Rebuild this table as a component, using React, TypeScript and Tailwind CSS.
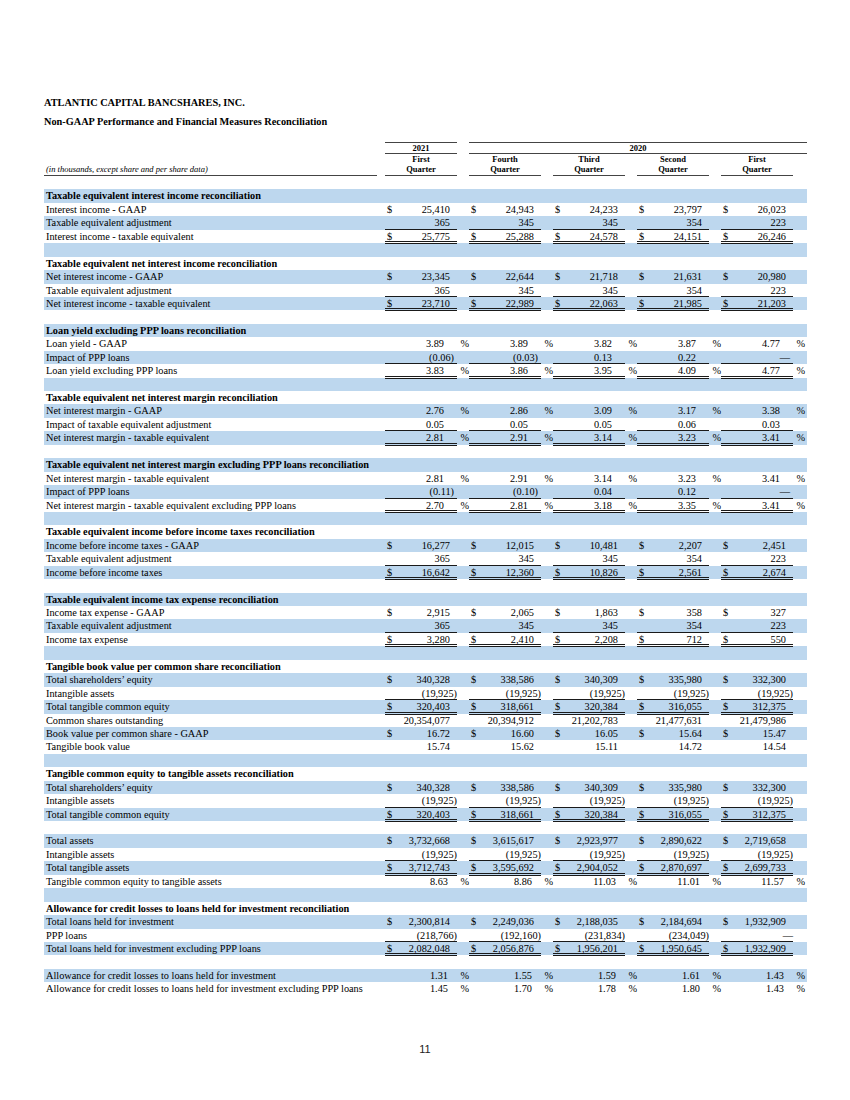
import React from 'react';

type Row =
  | { t: 'b' }
  | { t: 'h'; label: string }
  | {
      t: 'd';
      label: string;
      vals: string[];
      dollar?: boolean;
      pct?: boolean;
      kind?: 'p' | 'p2';
      line?: 's' | 'd';
    };

const adj = ['365', '345', '345', '354', '223'];
const intang = ['(19,925)', '(19,925)', '(19,925)', '(19,925)', '(19,925)'];

const rows: Row[] = [
  { t: 'b' },
  { t: 'h', label: 'Taxable equivalent interest income reconciliation' },
  { t: 'd', label: 'Interest income - GAAP', dollar: true, vals: ['25,410', '24,943', '24,233', '23,797', '26,023'] },
  { t: 'd', label: 'Taxable equivalent adjustment', vals: adj, line: 's' },
  { t: 'd', label: 'Interest income - taxable equivalent', dollar: true, vals: ['25,775', '25,288', '24,578', '24,151', '26,246'], line: 'd' },
  { t: 'b' },
  { t: 'h', label: 'Taxable equivalent net interest income reconciliation' },
  { t: 'd', label: 'Net interest income - GAAP', dollar: true, vals: ['23,345', '22,644', '21,718', '21,631', '20,980'] },
  { t: 'd', label: 'Taxable equivalent adjustment', vals: adj, line: 's' },
  { t: 'd', label: 'Net interest income - taxable equivalent', dollar: true, vals: ['23,710', '22,989', '22,063', '21,985', '21,203'], line: 'd' },
  { t: 'b' },
  { t: 'h', label: 'Loan yield excluding PPP loans reconciliation' },
  { t: 'd', label: 'Loan yield - GAAP', kind: 'p', pct: true, vals: ['3.89', '3.89', '3.82', '3.87', '4.77'] },
  { t: 'd', label: 'Impact of PPP loans', kind: 'p', vals: ['(0.06)', '(0.03)', '0.13', '0.22', '—'], line: 's' },
  { t: 'd', label: 'Loan yield excluding PPP loans', kind: 'p', pct: true, vals: ['3.83', '3.86', '3.95', '4.09', '4.77'], line: 'd' },
  { t: 'b' },
  { t: 'h', label: 'Taxable equivalent net interest margin reconciliation' },
  { t: 'd', label: 'Net interest margin - GAAP', kind: 'p', pct: true, vals: ['2.76', '2.86', '3.09', '3.17', '3.38'] },
  { t: 'd', label: 'Impact of taxable equivalent adjustment', kind: 'p', vals: ['0.05', '0.05', '0.05', '0.06', '0.03'], line: 's' },
  { t: 'd', label: 'Net interest margin - taxable equivalent', kind: 'p', pct: true, vals: ['2.81', '2.91', '3.14', '3.23', '3.41'], line: 'd' },
  { t: 'b' },
  { t: 'h', label: 'Taxable equivalent net interest margin excluding PPP loans reconciliation' },
  { t: 'd', label: 'Net interest margin - taxable equivalent', kind: 'p', pct: true, vals: ['2.81', '2.91', '3.14', '3.23', '3.41'] },
  { t: 'd', label: 'Impact of PPP loans', kind: 'p', vals: ['(0.11)', '(0.10)', '0.04', '0.12', '—'], line: 's' },
  { t: 'd', label: 'Net interest margin - taxable equivalent excluding PPP loans', kind: 'p', pct: true, vals: ['2.70', '2.81', '3.18', '3.35', '3.41'], line: 'd' },
  { t: 'b' },
  { t: 'h', label: 'Taxable equivalent income before income taxes reconciliation' },
  { t: 'd', label: 'Income before income taxes - GAAP', dollar: true, vals: ['16,277', '12,015', '10,481', '2,207', '2,451'] },
  { t: 'd', label: 'Taxable equivalent adjustment', vals: adj, line: 's' },
  { t: 'd', label: 'Income before income taxes', dollar: true, vals: ['16,642', '12,360', '10,826', '2,561', '2,674'], line: 'd' },
  { t: 'b' },
  { t: 'h', label: 'Taxable equivalent income tax expense reconciliation' },
  { t: 'd', label: 'Income tax expense - GAAP', dollar: true, vals: ['2,915', '2,065', '1,863', '358', '327'] },
  { t: 'd', label: 'Taxable equivalent adjustment', vals: adj, line: 's' },
  { t: 'd', label: 'Income tax expense', dollar: true, vals: ['3,280', '2,410', '2,208', '712', '550'], line: 'd' },
  { t: 'b' },
  { t: 'h', label: 'Tangible book value per common share reconciliation' },
  { t: 'd', label: 'Total shareholders’ equity', dollar: true, vals: ['340,328', '338,586', '340,309', '335,980', '332,300'] },
  { t: 'd', label: 'Intangible assets', vals: intang, line: 's' },
  { t: 'd', label: 'Total tangible common equity', dollar: true, vals: ['320,403', '318,661', '320,384', '316,055', '312,375'], line: 'd' },
  { t: 'd', label: 'Common shares outstanding', vals: ['20,354,077', '20,394,912', '21,202,783', '21,477,631', '21,479,986'] },
  { t: 'd', label: 'Book value per common share - GAAP', dollar: true, vals: ['16.72', '16.60', '16.05', '15.64', '15.47'] },
  { t: 'd', label: 'Tangible book value', vals: ['15.74', '15.62', '15.11', '14.72', '14.54'] },
  { t: 'b' },
  { t: 'h', label: 'Tangible common equity to tangible assets reconciliation' },
  { t: 'd', label: 'Total shareholders’ equity', dollar: true, vals: ['340,328', '338,586', '340,309', '335,980', '332,300'] },
  { t: 'd', label: 'Intangible assets', vals: intang, line: 's' },
  { t: 'd', label: 'Total tangible common equity', dollar: true, vals: ['320,403', '318,661', '320,384', '316,055', '312,375'], line: 'd' },
  { t: 'b' },
  { t: 'd', label: 'Total assets', dollar: true, vals: ['3,732,668', '3,615,617', '2,923,977', '2,890,622', '2,719,658'] },
  { t: 'd', label: 'Intangible assets', vals: intang, line: 's' },
  { t: 'd', label: 'Total tangible assets', dollar: true, vals: ['3,712,743', '3,595,692', '2,904,052', '2,870,697', '2,699,733'], line: 'd' },
  { t: 'd', label: 'Tangible common equity to tangible assets', kind: 'p2', pct: true, vals: ['8.63', '8.86', '11.03', '11.01', '11.57'] },
  { t: 'b' },
  { t: 'h', label: 'Allowance for credit losses to loans held for investment reconciliation' },
  { t: 'd', label: 'Total loans held for investment', dollar: true, vals: ['2,300,814', '2,249,036', '2,188,035', '2,184,694', '1,932,909'] },
  { t: 'd', label: 'PPP loans', vals: ['(218,766)', '(192,160)', '(231,834)', '(234,049)', '—'], line: 's' },
  { t: 'd', label: 'Total loans held for investment excluding PPP loans', dollar: true, vals: ['2,082,048', '2,056,876', '1,956,201', '1,950,645', '1,932,909'], line: 'd' },
  { t: 'b' },
  { t: 'd', label: 'Allowance for credit losses to loans held for investment', kind: 'p2', pct: true, vals: ['1.31', '1.55', '1.59', '1.61', '1.43'] },
  { t: 'd', label: 'Allowance for credit losses to loans held for investment excluding PPP loans', kind: 'p2', pct: true, vals: ['1.45', '1.70', '1.78', '1.80', '1.43'] },
];

function valuePad(v: string, kind?: 'p' | 'p2') {
  const special = v.startsWith('(') || v === '—';
  if (kind === 'p') return special ? 'pr-[3px]' : 'pr-[13px]';
  if (kind === 'p2') return special ? 'pr-[3px]' : 'pr-[9px]';
  return special ? 'pr-0' : 'pr-[7px]';
}

function DataCells({ r }: { r: Extract<Row, { t: 'd' }> }) {
  const lineCls =
    r.line === 's'
      ? 'h-full border-b border-[#1a1a1a]'
      : r.line === 'd'
      ? 'h-[14.5px] relative z-[1] border-b-[3px] border-double border-[#1a1a1a]'
      : 'h-full';
  return (
    <>
      {r.vals.map((v, i) => (
        <div key={i} className="w-[84px] h-full flex">
          <div className={`w-[72px] flex items-start justify-between pt-[1px] ${lineCls}`}>
            <span className="pl-[2px]">{r.dollar ? '$' : ''}</span>
            <span className={valuePad(v, r.kind)}>{v}</span>
          </div>
          <div className="w-[12px] h-full flex items-start justify-end pt-[1px]">{r.pct ? '%' : ''}</div>
        </div>
      ))}
    </>
  );
}

export default function App() {
  const quarters = [
    ['First', 'Quarter'],
    ['Fourth', 'Quarter'],
    ['Third', 'Quarter'],
    ['Second', 'Quarter'],
    ['First', 'Quarter'],
  ];
  return (
    <div className="w-[850px] min-h-[1100px] bg-white text-black font-['Liberation_Serif',serif]">
      <div className="pl-[44px] pt-[96px]">
        <div className="text-[10.3px] font-bold leading-[14px]">ATLANTIC CAPITAL BANCSHARES, INC.</div>
        <div className="text-[10.3px] font-bold leading-[14px] mt-[5px]">
          Non-GAAP Performance and Financial Measures Reconciliation
        </div>

        {/* header */}
        <div className="w-[763px] mt-[13px] text-[8.5px] font-bold">
          <div className="flex h-[12px]">
            <div className="w-[341px]" />
            <div className="w-[72px] border-t border-b border-[#444] flex items-center justify-center leading-none">
              2021
            </div>
            <div className="w-[12px]" />
            <div className="flex-1 border-t border-b border-[#444] flex items-center justify-center leading-none">
              2020
            </div>
          </div>
          <div className="flex h-[10px]">
            <div className="w-[341px]" />
            {quarters.map((q, i) => (
              <div key={i} className="w-[84px] flex">
                <div className="w-[72px] flex items-center justify-center leading-none">{q[0]}</div>
              </div>
            ))}
          </div>
          <div className="flex h-[12px]">
            <div className="w-[341px] pr-[8px]">
              <div className="h-full border-b border-[#444] flex items-center font-normal italic leading-none pl-[2px]">
                (in thousands, except share and per share data)
              </div>
            </div>
            {quarters.map((q, i) => (
              <div key={i} className="w-[84px] flex">
                <div className="w-[72px] border-b border-[#444] flex items-center justify-center leading-none">
                  {q[1]}
                </div>
              </div>
            ))}
          </div>
        </div>

        {/* body */}
        <div className="w-[763px] text-[10.3px] leading-[12px]">
          {rows.map((r, idx) => {
            const bg = idx % 2 === 1 ? 'bg-[#bdd7ee]' : 'bg-white';
            if (r.t === 'b') return <div key={idx} className={`h-[13.45px] ${bg}`} />;
            if (r.t === 'h')
              return (
                <div key={idx} className={`h-[13.45px] ${bg} pt-[1px] pl-[2px] font-bold whitespace-nowrap`}>
                  {r.label}
                </div>
              );
            return (
              <div key={idx} className={`h-[13.45px] ${bg} flex`}>
                <div className="w-[341px] h-full pt-[1px] pl-[2px] whitespace-nowrap">{r.label}</div>
                <DataCells r={r} />
              </div>
            );
          })}
        </div>
      </div>
      <div className="mt-[46px] text-center text-[11px] leading-[14px] font-['Liberation_Sans',sans-serif] text-[#222]">
        11
      </div>
    </div>
  );
}
